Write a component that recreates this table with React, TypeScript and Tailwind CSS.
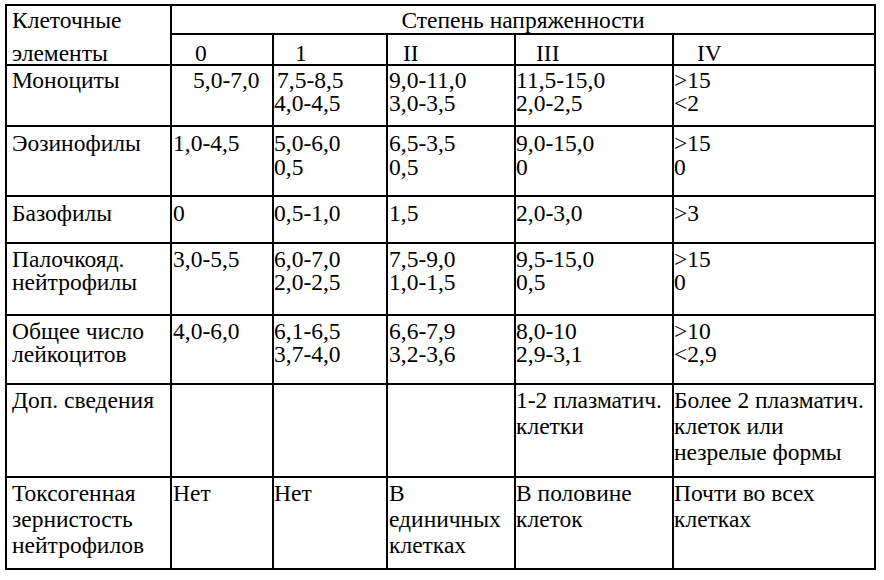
const serif = { fontFamily: '"Liberation Serif", "Times New Roman", serif' };

type Row = {
  lh: string;
  pt: string;
  cells: string[][];
};

const rows: Row[] = [
  {
    lh: "leading-[23px]",
    pt: "pt-[3px]",
    cells: [["Моноциты"], ["5,0-7,0"], ["7,5-8,5", "4,0-4,5"], ["9,0-11,0", "3,0-3,5"], ["11,5-15,0", "2,0-2,5"], [">15", "<2"]],
  },
  {
    lh: "leading-[24px]",
    pt: "pt-[4px]",
    cells: [["Эозинофилы"], ["1,0-4,5"], ["5,0-6,0", "0,5"], ["6,5-3,5", "0,5"], ["9,0-15,0", "0"], [">15", "0"]],
  },
  {
    lh: "leading-[24px]",
    pt: "pt-[4px]",
    cells: [["Базофилы"], ["0"], ["0,5-1,0"], ["1,5"], ["2,0-3,0"], [">3"]],
  },
  {
    lh: "leading-[23px]",
    pt: "pt-[4px]",
    cells: [["Палочкояд.", "нейтрофилы"], ["3,0-5,5"], ["6,0-7,0", "2,0-2,5"], ["7,5-9,0", "1,0-1,5"], ["9,5-15,0", "0,5"], [">15", "0"]],
  },
  {
    lh: "leading-[23px]",
    pt: "pt-[4px]",
    cells: [["Общее число", "лейкоцитов"], ["4,0-6,0"], ["6,1-6,5", "3,7-4,0"], ["6,6-7,9", "3,2-3,6"], ["8,0-10", "2,9-3,1"], [">10", "<2,9"]],
  },
  {
    lh: "leading-[26px]",
    pt: "pt-[2px]",
    cells: [["Доп. сведения"], [], [], [], ["1-2 плазматич.", "клетки"], ["Более 2 плазматич.", "клеток или", "незрелые формы"]],
  },
  {
    lh: "leading-[26px]",
    pt: "pt-[2px]",
    cells: [["Токсогенная", "зернистость", "нейтрофилов"], ["Нет"], ["Нет"], ["В", "единичных", "клетках"], ["В половине", "клеток"], ["Почти во всех", "клетках"]],
  },
];

const colPad = ["pl-[5px]", "pl-[1px]", "pl-0", "pl-[1px]", "pl-0", "pl-0"];

export default function App() {
  return (
    <div className="w-[884px] h-[580px] bg-white text-black text-[23.5px] pt-[4px] pl-[5px]" style={serif}>
      <div className="grid w-fit bg-black p-[2px] gap-[2px] grid-cols-[163px_100px_112px_126px_156px_200px] grid-rows-[27px_29px_59px_68px_45px_70px_67px_91px_90px]">
        <div className="row-span-2 bg-white pl-[5px] pt-[3px] leading-[23px]">
          <div>Клеточные</div>
          <div className="mt-[10px]">элементы</div>
        </div>
        <div className="col-span-5 bg-white text-center pt-[3px] leading-[23px]">Степень напряженности</div>
        <div className="bg-white pl-[23px] pt-[7px] leading-[23px]">0</div>
        <div className="bg-white pl-[21px] pt-[7px] leading-[23px]">1</div>
        <div className="bg-white pl-[15px] pt-[7px] leading-[23px]">II</div>
        <div className="bg-white pl-[20px] pt-[7px] leading-[23px]">III</div>
        <div className="bg-white pl-[23px] pt-[7px] leading-[23px]">IV</div>
        {rows.map((r, i) =>
          r.cells.map((lines, j) => (
            <div key={`${i}-${j}`} className={`bg-white whitespace-nowrap ${r.pt} ${r.lh} ${colPad[j]}`}>
              {lines.map((t, k) => (
                <div
                  key={k}
                  className={
                    i === 0 && j === 1
                      ? "pl-[20px]"
                      : i === 0 && j === 2 && k === 0
                      ? "pl-[3px]"
                      : ""
                  }
                >
                  {t}
                </div>
              ))}
            </div>
          ))
        )}
      </div>
    </div>
  );
}
